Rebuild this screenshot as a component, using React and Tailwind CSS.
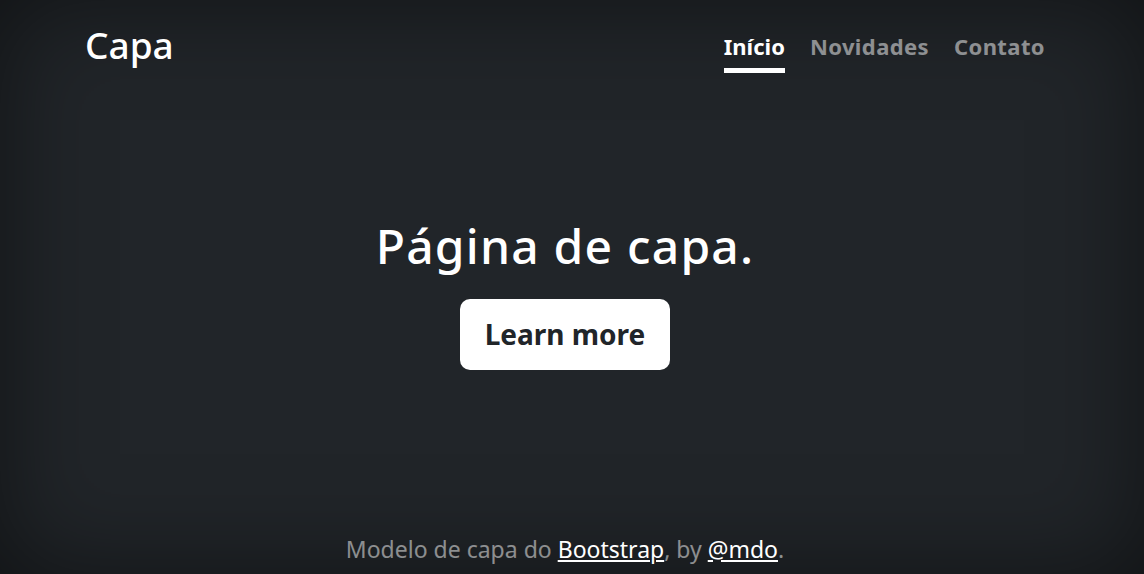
export default function App() {
  const navLinks = [
    { label: "Início", active: true },
    { label: "Novidades" },
    { label: "Contato" },
  ];

  return (
    <div
      className="flex h-[574px] w-full overflow-hidden bg-[#212529] text-center text-white shadow-[inset_0_0_100px_rgba(0,0,0,0.5)]"
      style={{ fontFamily: '"Noto Sans", "Open Sans", sans-serif' }}
    >
      <div className="ml-[85px] flex w-[960px] flex-col">
        <header className="flex items-start justify-between pt-[20px]">
          <h3 className="m-0 mt-[3px] text-[37px] font-medium leading-[1.2]">Capa</h3>
          <nav className="flex gap-[25px] pt-[5px]">
            {navLinks.map((link) => (
              <a
                key={link.label}
                href="#"
                className={
                  link.active
                    ? "border-b-[5px] border-white py-[5px] text-[22px] font-bold leading-[1.5] text-white"
                    : "border-b-[5px] border-transparent py-[5px] text-[22px] font-bold leading-[1.5] tracking-[0.4px] text-white/50"
                }
              >
                {link.label}
              </a>
            ))}
          </nav>
        </header>

        <main className="mt-[144px] flex flex-col items-center">
          <h1 className="m-0 text-[48px] font-medium leading-[1.2] tracking-[1.2px]">Página de capa.</h1>
          <a
            href="#"
            className="mt-[24px] flex h-[71px] w-[210px] items-center justify-center rounded-[10px] bg-white text-[28px] font-bold text-[#212529]"
          >
            Learn more
          </a>
        </main>

        <footer className="mt-auto pb-[8px] text-[23px] leading-[1.5] text-white/50">
          <p className="m-0">
            Modelo de capa do{" "}
            <a href="#" className="text-white underline">
              Bootstrap
            </a>
            , by{" "}
            <a href="#" className="text-white underline">
              @mdo
            </a>
            .
          </p>
        </footer>
      </div>
    </div>
  );
}
